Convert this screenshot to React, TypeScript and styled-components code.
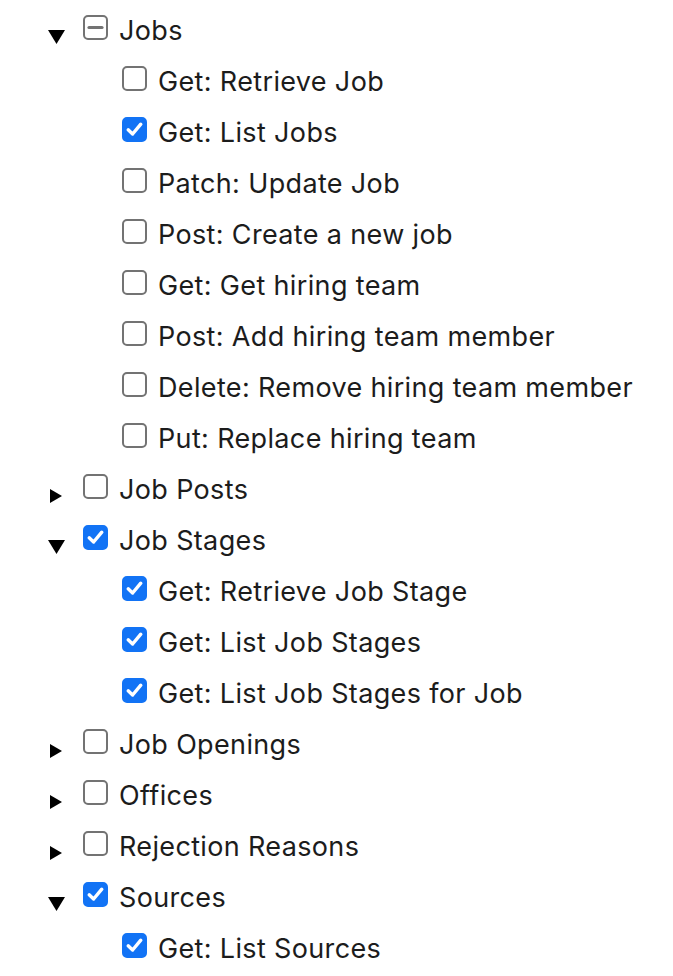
import React from "react";
import styled, { createGlobalStyle } from "styled-components";

const Global = createGlobalStyle`
  html, body { margin: 0; padding: 0; background: #ffffff; }
  body { font-family: Inter, "Noto Sans", sans-serif; }
`;

type CheckState = "checked" | "unchecked" | "mixed";

interface Node {
  label: string;
  state: CheckState;
  expanded?: boolean;
  children?: { label: string; state: CheckState }[];
}

const data: Node[] = [
  {
    label: "Jobs",
    state: "mixed",
    expanded: true,
    children: [
      { label: "Get: Retrieve Job", state: "unchecked" },
      { label: "Get: List Jobs", state: "checked" },
      { label: "Patch: Update Job", state: "unchecked" },
      { label: "Post: Create a new job", state: "unchecked" },
      { label: "Get: Get hiring team", state: "unchecked" },
      { label: "Post: Add hiring team member", state: "unchecked" },
      { label: "Delete: Remove hiring team member", state: "unchecked" },
      { label: "Put: Replace hiring team", state: "unchecked" },
    ],
  },
  { label: "Job Posts", state: "unchecked", expanded: false },
  {
    label: "Job Stages",
    state: "checked",
    expanded: true,
    children: [
      { label: "Get: Retrieve Job Stage", state: "checked" },
      { label: "Get: List Job Stages", state: "checked" },
      { label: "Get: List Job Stages for Job", state: "checked" },
    ],
  },
  { label: "Job Openings", state: "unchecked", expanded: false },
  { label: "Offices", state: "unchecked", expanded: false },
  { label: "Rejection Reasons", state: "unchecked", expanded: false },
  {
    label: "Sources",
    state: "checked",
    expanded: true,
    children: [{ label: "Get: List Sources", state: "checked" }],
  },
];

const Tree = styled.ul`
  list-style: none;
  margin: 0;
  padding: 5px 0 0 48px;
`;

const Item = styled.li`
  margin: 0;
  padding: 0;
`;

const Row = styled.div`
  display: flex;
  align-items: center;
  height: 51px;
`;

const Toggle = styled.span<{ $open: boolean }>`
  width: 35px;
  flex: 0 0 35px;
  display: flex;
  align-items: center;
  padding-left: ${(p) => (p.$open ? "0px" : "2px")};
  box-sizing: border-box;
  margin-top: 12px;
  color: #000;
`;

const Box = styled.span<{ $state: CheckState }>`
  width: 25px;
  height: 25px;
  flex: 0 0 25px;
  box-sizing: border-box;
  border-radius: 5px;
  border: 2px solid ${(p) => (p.$state === "checked" ? "#1273f5" : "#737373")};
  background: ${(p) => (p.$state === "checked" ? "#1273f5" : "#ffffff")};
  display: flex;
  align-items: center;
  justify-content: center;
  margin-top: -6px;
`;

const Label = styled.span`
  margin-left: 11px;
  font-family: Inter, "Noto Sans", sans-serif;
  font-size: 27px;
  color: #1c1c1c;
  white-space: nowrap;
  letter-spacing: 0.35px;
`;

const Children = styled.ul`
  list-style: none;
  margin: 0;
  padding: 0 0 0 74px;
`;

const Triangle = ({ open }: { open: boolean }) =>
  open ? (
    <svg width="17" height="14" viewBox="0 0 17 14">
      <polygon points="0,0 17,0 8.5,14" fill="#000" />
    </svg>
  ) : (
    <svg width="12" height="14" viewBox="0 0 12 14">
      <polygon points="0,0 12,7 0,14" fill="#000" />
    </svg>
  );

const Check = ({ state }: { state: CheckState }) => {
  if (state === "checked")
    return (
      <svg width="21" height="21" viewBox="0 0 21 21">
        <path
          d="M4.2 10.8 L8.6 15 L16.8 5.2"
          fill="none"
          stroke="#fff"
          strokeWidth="3.4"
          strokeLinecap="round"
          strokeLinejoin="round"
        />
      </svg>
    );
  if (state === "mixed")
    return (
      <svg width="21" height="21" viewBox="0 0 21 21">
        <path d="M4 10.5 H17" stroke="#737373" strokeWidth="3.2" strokeLinecap="round" />
      </svg>
    );
  return null;
};

const CheckRow = ({ label, state }: { label: string; state: CheckState }) => (
  <>
    <Box $state={state}>
      <Check state={state} />
    </Box>
    <Label>{label}</Label>
  </>
);

export default function App() {
  return (
    <>
      <Global />
      <Tree>
        {data.map((n) => (
          <Item key={n.label}>
            <Row>
              <Toggle $open={!!n.expanded}>
                <Triangle open={!!n.expanded} />
              </Toggle>
              <CheckRow label={n.label} state={n.state} />
            </Row>
            {n.expanded && n.children && (
              <Children>
                {n.children.map((c) => (
                  <Item key={c.label}>
                    <Row>
                      <CheckRow label={c.label} state={c.state} />
                    </Row>
                  </Item>
                ))}
              </Children>
            )}
          </Item>
        ))}
      </Tree>
    </>
  );
}
